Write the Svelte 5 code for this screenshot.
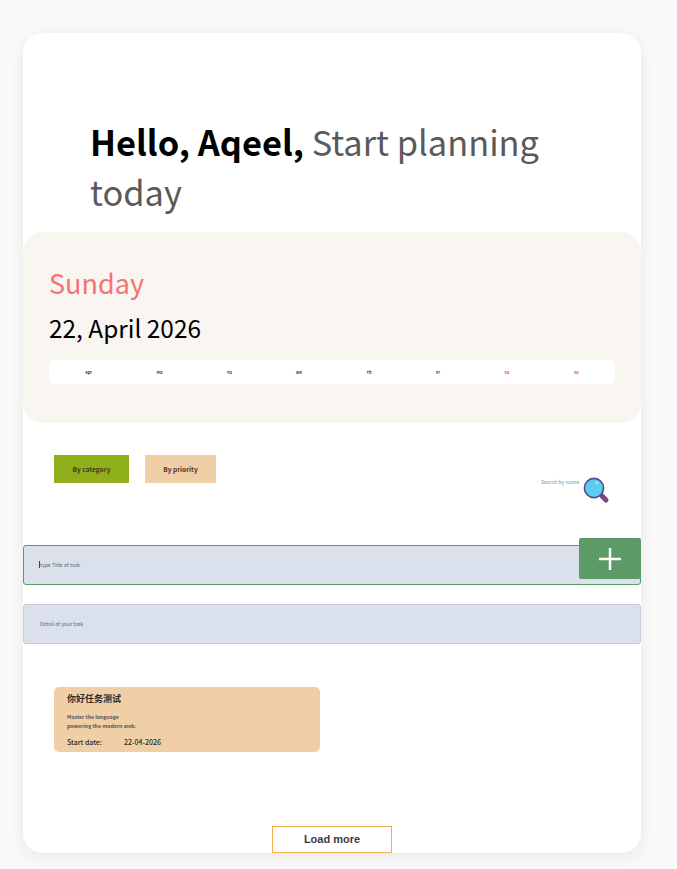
<script>
	let days = ['Apr', 'Mo', 'Tu', 'We', 'Th', 'Fr', 'Sa', 'Su'];
	let tasks = [
		{
			title: '你好任务测试',
			line1: 'Master the language',
			line2: 'powering the modern web.',
			start: '22-04-2026'
		}
	];
</script>

<div class="page">
	<div class="card">
		<h1 class="greeting"><b>Hello, Aqeel,</b> Start planning today</h1>

		<div class="date-panel">
			<div class="day">Sunday</div>
			<div class="date">22, April 2026</div>
			<div class="week">
				{#each days as d}
					<span class="week-item" class:weekend={d === 'Sa' || d === 'Su'}>{d}</span>
				{/each}
			</div>
		</div>

		<div class="filters">
			<button class="tab green">By category</button>
			<button class="tab peach">By priority</button>
			<div class="search">
				<span>Search by name</span>
				<svg width="28" height="28" viewBox="0 0 28 28">
					<path d="M18.500 18.500L23 23" stroke="#7b4488" stroke-width="5" stroke-linecap="round" />
					<circle cx="11" cy="11" r="9.600" fill="#5ccdee" stroke="#4d4c92" stroke-width="1.600" />
					<circle cx="14" cy="6" r="1.400" fill="#a8e6f6" />
				</svg>
			</div>
		</div>

		<div class="form">
			<div class="title-row">
				<input class="field focused" placeholder="type Title of task" />
				<span class="caret"></span>
				<button class="add" aria-label="Add">
					<svg width="24" height="24" viewBox="0 0 24 24">
						<path d="M12 1v22M1 12h22" stroke="#fff" stroke-width="2.500" />
					</svg>
				</button>
			</div>
			<input class="field" placeholder="Detail of your task" />
		</div>

		<div class="tasks">
			{#each tasks as task}
				<div class="task">
					<div class="task-title">{task.title}</div>
					<p class="task-text">{task.line1}<br />{task.line2}</p>
					<div class="task-date"><span>Start date:</span><span>{task.start}</span></div>
				</div>
			{/each}
		</div>

		<button class="more">Load more</button>
	</div>
</div>

<style>
	:global(body) {
		background: #f9f9f9;
	}

	.page {
		padding: 33px 36px 16px 23px;
		font-family: "Noto Sans CJK SC", "Noto Sans", sans-serif;
	}

	.card {
		height: 820px;
		background: #fff;
		border-radius: 20px;
		box-shadow: 0 4px 16px rgba(0, 0, 0, 0.07);
		display: flex;
		flex-direction: column;
	}

	.greeting {
		margin: 0;
		padding: 83px 80px 0 67px;
		height: 101px;
		font-size: 34.400px;
		line-height: 50px;
		font-weight: 400;
		color: #5a5a5a;
	}

	.greeting b {
		color: #000;
		font-weight: 700;
	}

	.date-panel {
		margin-top: 15px;
		height: 191px;
		box-sizing: border-box;
		padding: 32px 26px 0 26px;
		background: #f9f5f0;
		border-radius: 20px;
	}

	.day {
		font-size: 27px;
		line-height: 38px;
		color: #f87171;
	}

	.date {
		margin-top: 6px;
		font-size: 24.400px;
		line-height: 40px;
		color: #000;
	}

	.week {
		margin-top: 12px;
		height: 24px;
		padding: 0 4px;
		background: #fff;
		border-radius: 6px;
		display: flex;
		align-items: center;
		justify-content: space-around;
	}

	.week-item {
		font-size: 4px;
		font-weight: 700;
		color: #333;
	}

	.week-item.weekend {
		color: #f05040;
	}

	.filters {
		margin-top: 32px;
		height: 58px;
		padding: 0 30px 0 31px;
		display: flex;
		gap: 16px;
		position: relative;
	}

	.tab {
		height: 28px;
		border: none;
		font-family: inherit;
		font-size: 6.600px;
		font-weight: 700;
		color: #4a3728;
	}

	.tab.green {
		width: 75px;
		background: #8fb01a;
	}

	.tab.peach {
		width: 71px;
		background: #f0cfa6;
		color: #5c2c2c;
	}

	.search {
		margin-left: auto;
		margin-top: 22px;
		height: 28px;
		display: flex;
		align-items: flex-start;
		gap: 4px;
		font-size: 5px;
		font-weight: 500;
		color: #6fb0c8;
	}

	.search span {
		margin-top: -1px;
		line-height: 12px;
	}

	.form {
		margin-top: 32px;
		display: flex;
		flex-direction: column;
		gap: 19px;
	}

	.title-row {
		position: relative;
		display: flex;
	}

	.field {
		width: 100%;
		height: 40px;
		box-sizing: border-box;
		padding: 0 16px 2px;
		background: #dae1ed;
		border: 1px solid #c5cbd8;
		border-radius: 3px;
		font-family: inherit;
		font-size: 5.200px;
		outline: none;
	}

	.field::placeholder {
		color: #666;
	}

	.field.focused {
		border-color: #5a9a64;
	}

	.caret {
		position: absolute;
		left: 16px;
		top: 16px;
		width: 1px;
		height: 7px;
		background: #444;
	}

	.add {
		position: absolute;
		right: 0;
		top: -7px;
		width: 62px;
		height: 41px;
		padding: 0;
		border: none;
		border-radius: 2px;
		background: #5c9a68;
		display: flex;
		align-items: center;
		justify-content: center;
	}

	.tasks {
		margin-top: 43px;
		padding-left: 31px;
	}

	.task {
		width: 266px;
		height: 65px;
		box-sizing: border-box;
		padding: 5px 13px;
		background: #f0cfa6;
		border-radius: 5px;
		color: #2b2b2b;
	}

	.task-title {
		font-size: 9px;
		line-height: 13px;
		font-weight: 700;
	}

	.task-text {
		margin: 8px 0 0;
		font-size: 5.200px;
		line-height: 8.500px;
		font-weight: 700;
		color: #555;
	}

	.task-date {
		margin-top: 7px;
		font-size: 7px;
		line-height: 11px;
		font-weight: 500;
		display: flex;
	}

	.task-date span:first-child {
		width: 57px;
	}

	.more {
		margin: auto auto 0;
		width: 120px;
		height: 27px;
		padding: 0 0 2px;
		background: #fff;
		border: 1px solid #f0b050;
		font-family: "Liberation Sans", Arial, sans-serif;
		font-size: 11px;
		font-weight: 700;
		color: #3a3a4a;
	}
</style>
